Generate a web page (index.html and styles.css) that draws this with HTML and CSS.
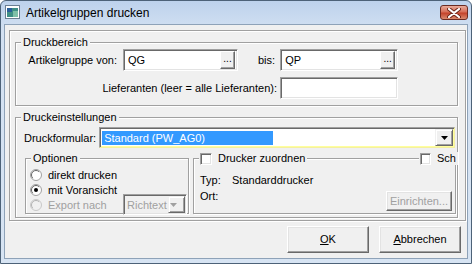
FILE: index.html
```html
<!DOCTYPE html>
<html>
<head>
	<meta charset="utf-8">
	<title>Artikelgruppen drucken</title>
	<link rel="stylesheet" href="styles.css">
</head>
<body>
	<div class="window">
		<div class="titlebar">
			<svg class="appicon" width="15" height="14" viewBox="0 0 15 14">
				<rect x="0.5" y="0.5" width="14" height="13" fill="#fff" stroke="#6b7f93"/>
				<rect x="2" y="3" width="11" height="9" fill="#3f8f86"/>
				<rect x="2" y="3" width="5" height="4" fill="#2a5f9a"/>
				<rect x="8" y="6" width="5" height="6" fill="#7fc0a8"/>
			</svg>
			<span class="title">Artikelgruppen drucken</span>
			<div class="close">
				<svg width="14" height="10" viewBox="0 0 14 10">
					<path d="M2 1 L12 9 M12 1 L2 9" stroke="#6a2418" stroke-width="4" stroke-linecap="round"/>
					<path d="M2 1 L12 9 M12 1 L2 9" stroke="#fff" stroke-width="2.2" stroke-linecap="round"/>
				</svg>
			</div>
		</div>
		<div class="client">
			<div class="frame">
				<div class="group bereich">
					<span class="legend">Druckbereich</span>
					<div class="row">
						<label class="lbl-von">Artikelgruppe von:</label>
						<div class="edit ed-von"><span>QG</span><span class="dots">...</span></div>
						<label class="lbl-bis">bis:</label>
						<div class="edit ed-bis"><span>QP</span><span class="dots">...</span></div>
					</div>
					<div class="row row2">
						<label class="lbl-lief">Lieferanten (leer = alle Lieferanten):</label>
						<div class="edit ed-lief"></div>
					</div>
				</div>
				<div class="group einst">
					<span class="legend">Druckeinstellungen</span>
					<div class="row">
						<label class="lbl-form">Druckformular:</label>
						<div class="combo">
							<span class="sel">Standard (PW_AG0)</span>
							<span class="arrow"><svg width="7" height="4" viewBox="0 0 7 4"><path d="M0 0 H7 L3.5 4 Z" fill="#000"/></svg></span>
						</div>
					</div>
					<div class="subs">
						<div class="group optionen">
							<span class="legend">Optionen</span>
							<div class="radio">
								<svg width="12" height="12" viewBox="0 0 12 12"><circle cx="6" cy="6" r="5.5" fill="#fff" stroke="#a0a0a0"/><path d="M2.8 9.2 A4.5 4.5 0 0 1 9.2 2.8" fill="none" stroke="#696969"/></svg>
								<span>direkt drucken</span>
							</div>
							<div class="radio">
								<svg width="12" height="12" viewBox="0 0 12 12"><circle cx="6" cy="6" r="5.5" fill="#fff" stroke="#a0a0a0"/><path d="M2.8 9.2 A4.5 4.5 0 0 1 9.2 2.8" fill="none" stroke="#696969"/><circle cx="6" cy="6" r="2" fill="#000"/></svg>
								<span>mit Voransicht</span>
							</div>
							<div class="radio off">
								<svg width="12" height="12" viewBox="0 0 12 12"><circle cx="6" cy="6" r="5.5" fill="#f0f0f0" stroke="#c8c8c8"/><path d="M2.8 9.2 A4.5 4.5 0 0 1 9.2 2.8" fill="none" stroke="#b4b4b4"/></svg>
								<span>Export nach</span>
								<div class="combo small">
									<span>Richtext</span>
									<span class="arrow"><svg width="7" height="4" viewBox="0 0 7 4"><path d="M0 0 H7 L3.5 4 Z" fill="#a0a0a0"/></svg></span>
								</div>
							</div>
						</div>
						<div class="group drucker">
							<span class="legend check"><i class="box"></i>Drucker zuordnen</span>
							<span class="legend check sch"><i class="box"></i>Sch</span>
							<div class="info"><span class="key">Typ:</span>Standarddrucker</div>
							<div class="info"><span class="key">Ort:</span></div>
							<div class="btn einr">Einrichten...</div>
						</div>
					</div>
				</div>
			</div>
			<div class="buttons">
				<div class="btn"><u>O</u>K</div>
				<div class="btn"><u>A</u>bbrechen</div>
			</div>
		</div>
	</div>
</body>
</html>
```

FILE: styles.css
```css
* {margin: 0; padding: 0;}
body {font-family: "Liberation Sans", Arial, sans-serif; font-size: 11px; color: #000; background: #fff;}

.window {width: 472px; height: 264px; box-sizing: border-box; border: 1px solid #4d6278; border-radius: 6px 6px 0 0; padding: 0 3px; background: linear-gradient(#bdd2ec, #d3e1f2 30px, #d7e4f3);}

.titlebar {height: 23px; display: flex; align-items: center;}
.appicon {margin: 0 0 1px 1px;}
.title {margin-left: 6px; font-size: 12px; color: #000;}
.close {margin-left: auto; width: 28px; height: 15px; box-sizing: border-box; border: 1px solid #6b2b22; border-radius: 3px; display: flex; align-items: center; justify-content: center; background: linear-gradient(#e9ab9a, #d66e58 45%, #c4432b 55%, #d98a6e);}

.client {height: 235px; box-sizing: border-box; border: 1px solid #8ea2b8; background: #f0f0f0; padding: 5px 0 0 4px;}

.frame {width: 457px; box-sizing: border-box; border: 1px solid #a0a0a0; box-shadow: inset 1px 1px #fff, 1px 1px #fff; padding: 11px 7px 2px 5px;}

.group {position: relative; box-sizing: border-box; border: 1px solid #a0a0a0; box-shadow: inset 1px 1px #fff, 1px 1px #fff;}
.legend {position: absolute; top: -7px; left: 5px; padding: 0 2px; line-height: 13px; background: #f0f0f0;}

.row {display: flex; align-items: center;}

.bereich {height: 64px; padding-top: 6px;}
.bereich .row2 {margin-top: 6px;}
.lbl-von {width: 101px; text-align: right; margin-right: 6px;}
.lbl-bis {margin: 0 5px 0 20px;}
.lbl-lief {width: 261px; text-align: right; margin-right: 3px;}

.edit {height: 22px; box-sizing: border-box; background: #fff; border: 1px solid; border-color: #a0a0a0 #fff #fff #a0a0a0; box-shadow: inset 1px 1px #696969, inset -1px -1px #e3e3e3; display: flex; align-items: center; padding: 0 2px 0 4px; justify-content: space-between;}
.ed-von {width: 115px;}
.ed-bis {width: 118px;}
.ed-lief {width: 118px;}
.dots {width: 15px; height: 18px; box-sizing: border-box; background: #f0f0f0; border: 1px solid; border-color: #fff #696969 #696969 #fff; box-shadow: inset -1px -1px #a0a0a0; text-align: center; line-height: 14px; font-size: 10px;}

.einst {margin-top: 11px; height: 101px; padding: 9px 0 0 8px;}
.lbl-form {margin-right: 3px;}
.combo {width: 356px; height: 21px; box-sizing: border-box; background: #fff; border: 1px solid; border-color: #a0a0a0 #f4f0a0 #f4f0a0 #a0a0a0; box-shadow: inset 1px 1px #696969, inset -1px -1px #ffff9c; display: flex; align-items: center; padding: 0 1px 0 2px;}
.combo .sel {width: 169px; height: 14px; line-height: 14px; background: #3399ff; color: #fff; padding-left: 2px; margin-right: auto;}
.arrow {width: 18px; height: 17px; box-sizing: border-box; background: #f0f0f0; border: 1px solid; border-color: #f0f0f0 #696969 #696969 #f0f0f0; box-shadow: inset 1px 1px #fff, inset -1px -1px #a0a0a0; display: flex; align-items: center; justify-content: center;}

.subs {display: flex; margin-top: 10px;}
.optionen {width: 164px; height: 56px; margin-left: 1px; padding: 8px 0 0 4px;}
.radio {display: flex; align-items: center; height: 15px;}
.radio svg {margin-right: 6px;}
.radio.off span {color: #a0a0a0;}
.combo.small {width: 64px; margin-left: auto; margin-right: 1px; border-color: #a0a0a0 #fff #fff #a0a0a0; box-shadow: inset 1px 1px #696969, inset -1px -1px #e3e3e3; background: #f0f0f0; color: #a0a0a0; padding: 0 1px 0 3px; justify-content: space-between;}
.combo.small .arrow {width: 17px;}

.drucker {width: 263px; height: 56px; margin-left: 4px; padding: 13px 0 0 6px;}
.check {display: flex; align-items: center; padding: 0 2px 0 1px;}
.box {display: inline-block; width: 12px; height: 12px; box-sizing: border-box; background: #fff; border: 1px solid; border-color: #a0a0a0 #fff #fff #a0a0a0; box-shadow: inset 1px 1px #696969, inset -1px -1px #e3e3e3; margin-right: 6px;}
.sch {left: auto; right: -3px; width: 36px; overflow: hidden; white-space: nowrap;}
.info {height: 16px; line-height: 16px;}
.key {display: inline-block; width: 32px;}

.btn {box-sizing: border-box; background: #f0f0f0; border: 1px solid; border-color: #fff #696969 #696969 #fff; box-shadow: inset -1px -1px #a0a0a0, inset 1px 1px #e3e3e3; text-align: center;}
.einr {position: absolute; right: 3px; bottom: 2px; width: 66px; height: 20px; line-height: 18px; color: #a0a0a0;}

.buttons {display: flex; justify-content: flex-end; gap: 10px; margin: 5px 6px 0 0;}
.buttons .btn {width: 82px; height: 27px; line-height: 25px;}
```
